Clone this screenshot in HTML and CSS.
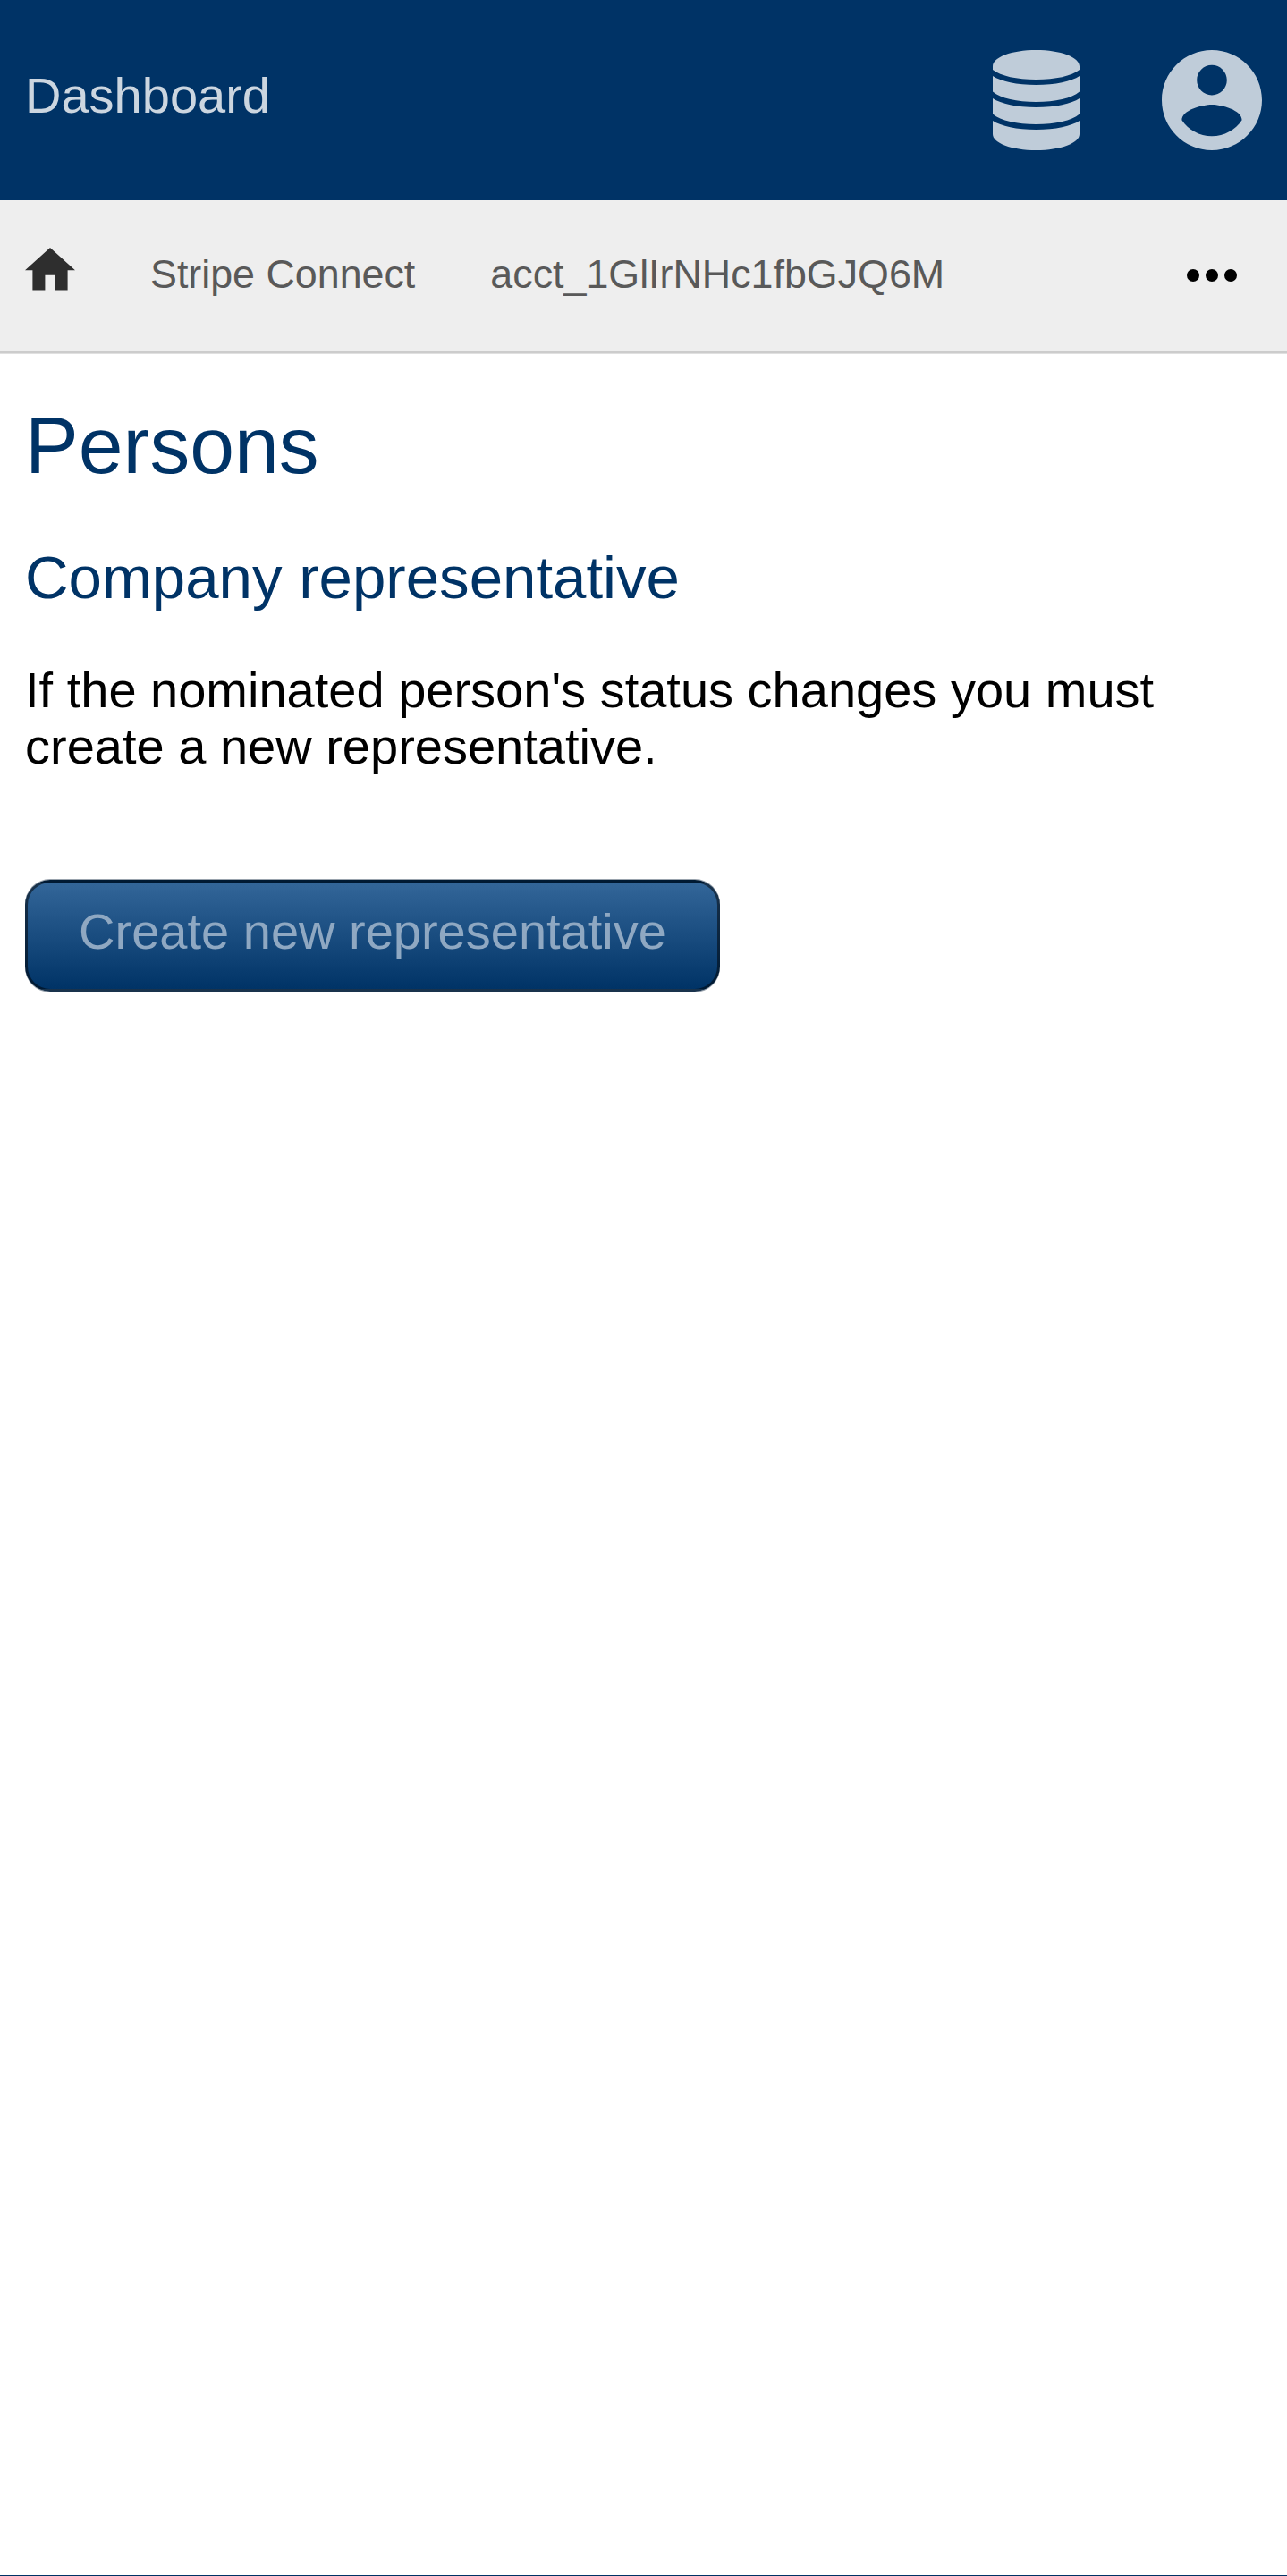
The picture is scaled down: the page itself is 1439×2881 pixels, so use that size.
FILE: index.html
```html
<!DOCTYPE html>
<html lang="en">
<head>
<meta charset="utf-8">
<title>Persons</title>
<link rel="stylesheet" href="styles.css">
</head>
<body>
<header class="header">
  <a class="header-title">Dashboard</a>
  <nav class="header-menu">
    <svg class="icon-database" viewBox="0 0 97 112"><path d="M0 22V18C0 8 21 0 48.500 0S97 8 97 18V22C88 29 70 33 48.500 33S9 29 0 22zM0 29C9 35 27 39 48.500 39S88 35 97 29V46.500C88 54 70 58 48.500 58S9 54 0 46.500zM0 54C9 60 27 64 48.500 64S88 60 97 54V71.500C88 79 70 83 48.500 83S9 79 0 71.500zM0 79C9 85 27 89 48.500 89S88 85 97 79V94C97 104 76 112 48.500 112S0 104 0 94z"/></svg>
    <svg class="icon-account" viewBox="2 2 20 20"><path d="M12 2C6.480 2 2 6.480 2 12s4.480 10 10 10 10-4.480 10-10S17.520 2 12 2zm0 3c1.660 0 3 1.340 3 3s-1.340 3-3 3-3-1.340-3-3 1.340-3 3-3zm0 14.200c-2.500 0-4.710-1.280-6-3.220.030-1.990 4-3.080 6-3.080 1.990 0 5.970 1.090 6 3.080-1.290 1.940-3.500 3.220-6 3.220z"/></svg>
  </nav>
</header>
<nav class="breadcrumb">
  <svg class="icon-home" viewBox="2 3 20 17"><path d="M10 20v-6h4v6h5v-8h3L12 3 2 12h3v8z"/></svg>
  <a class="crumb">Stripe Connect</a>
  <a class="crumb">acct_1GlIrNHc1fbGJQ6M</a>
  <svg class="icon-more" viewBox="4 10 16 4"><circle cx="6" cy="12" r="2"/><circle cx="12" cy="12" r="2"/><circle cx="18" cy="12" r="2"/></svg>
</nav>
<main class="content">
  <h1 class="title">Persons</h1>
  <h2 class="subtitle">Company representative</h2>
  <p class="text">If the nominated person's status changes you must create a new representative.</p>
  <button class="button">Create new representative</button>
</main>
</body>
</html>
```

FILE: styles.css
```css
* { box-sizing: border-box; }
body {
  margin: 0;
  height: 2881px;
  display: flex;
  flex-direction: column;
  background: #fff;
  border-bottom: 1px solid #036;
  font: 56px/64px "Liberation Sans", Arial, sans-serif;
  color: #000;
}
.header {
  flex: none;
  height: 224px;
  padding: 0 28.500px 0 28px;
  display: flex;
  align-items: center;
  justify-content: space-between;
  background: #036;
}
.header-title { color: #ccd6e0; margin-bottom: 11px; }
.header-menu { display: flex; gap: 91.500px; fill: #bfccd9; }
.icon-database { width: 97px; height: 112px; }
.icon-account { width: 112px; height: 112px; }
.breadcrumb {
  flex: none;
  height: 171px;
  margin-bottom: 1px;
  padding: 0 56.500px 0 28px;
  display: flex;
  align-items: center;
  gap: 84px;
  background: #eee;
  border-bottom: 3px solid #ccc;
  box-shadow: 0 1px 0 #e0e0e0;
  font-size: 44.800px;
  line-height: 51px;
  color: #595959;
}
.crumb { margin-bottom: 3px; }
.icon-home { width: 56px; height: 47.600px; margin-bottom: 14px; fill: #2e2e2e; }
.icon-more { width: 56px; height: 14px; margin-left: auto; fill: #000; }
.content { padding: 51px 28px 0; }
.title, .subtitle { margin: 0; font-weight: 400; color: #036; }
.title { font-size: 89.600px; line-height: 102px; }
.subtitle { margin-top: 58px; font-size: 67.200px; line-height: 77px; }
.text { margin: 56px 0 0; line-height: 63px; }
.button {
  display: block;
  width: 777px;
  height: 125px;
  margin-top: 118px;
  padding: 0 0 10px;
  border: 3px solid rgba(0, 0, 0, 0.5);
  border-radius: 28px;
  background: linear-gradient(#369, #036);
  box-shadow: 0 -1px 0 rgba(0, 26, 51, 0.4), 0 1px 0 rgba(0, 26, 51, 0.4);
  font: inherit;
  text-align: center;
  color: #8fa8c2;
}
```
